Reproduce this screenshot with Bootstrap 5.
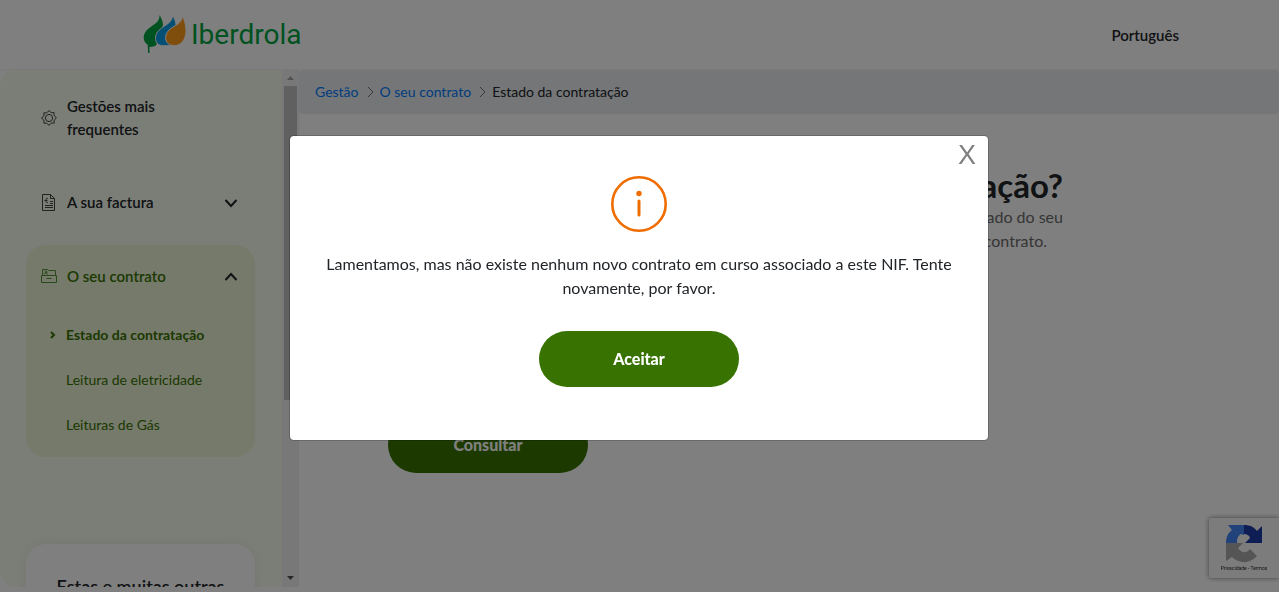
<!DOCTYPE html>
<html lang="pt">
<head>
<meta charset="utf-8">
<meta name="viewport" content="width=device-width, initial-scale=1">
<title>Iberdrola - Estado da contratação</title>
<link href="https://cdn.jsdelivr.net/npm/bootstrap@5.3.0/dist/css/bootstrap.min.css" rel="stylesheet">
<style>
body{font-family:Lato,sans-serif;color:#212529;height:100vh;overflow:hidden}
.site-header{height:70px;padding:0 100px 0 143px;border-bottom:1px solid #f4f4f6}
.brand-name{font:400 28px/32px Roboto,sans-serif;color:#00a443}
.language{font-size:15px;font-weight:600;line-height:22px}
.page-body{height:calc(100vh - 75px)}
.side{width:282px;background:#f6fbee;border-radius:16px 0 0 16px;padding:25px 27px 0 26px;overflow:hidden}
.side-item{padding:0 17px 0 15px;gap:10px;font-size:15px;font-weight:600;line-height:23px;background:none;border:0;color:#212529;text-align:left;width:100%}
.side-gap{margin-top:50px}
.side-active{margin-top:31px;background:#eaf4d6;border-radius:20px;height:212px;padding-top:20px;color:#387200}
.side-active .side-item,.side-active a{color:#387200}
.side-sub{padding-left:40px;margin-top:36px;gap:23px;font-size:14px;line-height:22px}
.side-sub a{text-decoration:none}
.side-sub .marker{left:-16px;top:7px}
.promo{margin-top:87px;border-radius:20px;box-shadow:0 0 12px rgba(0,0,0,.06);padding:29px 30px;height:160px;font-size:18px;line-height:26px;font-weight:600}
.scroll-track{width:17px;background:#f1f1f1}
.scroll-thumb{width:13px;height:314px;background:#c1c1c1}
.crumbs{height:44px;background:#e9ecef;border-radius:4px;padding:0 16px;font-size:14px;line-height:24px}
.crumbs a{color:#007bff;text-decoration:none}
.crumbs svg{margin:0 6px 0 8px}
.intro{margin-top:51px;padding-right:216px}
.intro h1{font-size:33px;line-height:40px;font-weight:700;margin:0}
.intro p{font-size:16px;line-height:24px;color:#6b6b6b;margin:0}
.pill{width:200px;height:56px;border-radius:28px;background:#387200;border:0;color:#fff;font-size:16px;font-weight:900}
.query{margin:164px 0 0 89px}
.recaptcha{position:fixed;right:0;bottom:14px;width:70px;height:60px;box-shadow:0 0 5px gray;border-radius:2px 0 0 2px;background:#f9f9f9;font:5px/8px Roboto,sans-serif;padding-top:5px}
.notice-layer{padding-right:1px}
.notice{max-width:700px;margin:135px auto}
.notice .modal-content{height:306px;border-radius:5px;padding:40px 30px 0}
.notice p{font-size:16px;line-height:24px;margin:20px 0 31px}
.close-x{position:absolute;right:12px;top:4px;background:none;border:0;padding:0;font:27px/30px "Liberation Sans",sans-serif;color:#7f7f7f}
</style>
</head>
<body>
<header class="site-header d-flex align-items-center justify-content-between bg-white">
  <a href="#" class="d-flex align-items-center text-decoration-none gap-1">
    <svg width="44" height="40" viewBox="0 0 44 40" aria-hidden="true">
      <path fill="#00a443" d="M16.500 0C17 8 9 10 4 15-1 20 0 27 4.500 29.500c.5 3 .5 5 .5 8.500h1.500v-6c3-.3 5-.7 6.500-1.500L20 10c0-4-1.800-7-3.500-10z"/>
      <path fill="#0a9ee8" stroke="#fff" d="M29.500 0c0 8-7 9.500-12 14-8 6-6 17 3 16.700h7L33 10c0-4-2-7-3.500-10z"/>
      <path fill="#ff9c1a" stroke="#fff" d="M39.500 0c0 9-9 10.500-13.500 15-6 6-4 15.500 5 15.700 8 0 12-7 12-15.200 0-6-2-11-3.500-15.500z"/>
    </svg>
    <span class="brand-name">Iberdrola</span>
  </a>
  <span class="language">Português</span>
</header>
<div class="page-body d-flex">
  <aside class="side flex-shrink-0">
    <a href="#" class="side-item d-flex align-items-center text-decoration-none">
      <svg class="flex-shrink-0" width="16" height="16" viewBox="0 0 16 16" fill="none" stroke="#444"><circle cx="8" cy="8" r="3.6"/><path d="M6.500 2.200 8 .6l1.500 1.600 1.200.5 2.300-.2v2.300l.7 1.300L15.400 8l-1.700 1.500-.6 1.300.1 2.300-2.300-.1-1.400.6L8 15.400l-1.500-1.700-1.300-.6-2.300.1.100-2.300-.6-1.300L.6 8l1.800-1.500.6-1.300-.1-2.400 2.400.1z"/></svg>
      <span>Gestões mais<br>frequentes</span>
    </a>
    <button class="side-item side-gap d-flex align-items-center" type="button">
      <svg class="flex-shrink-0" width="16" height="18" viewBox="0 0 16 18" fill="none" stroke="#444"><path d="M1.500.5h8l4 4v12H1.500zM9.500.5v4h4M9 7.500h3M9 9.500h3M4 11.500h8M4 13.500h8M7 4.500c-3-1-3 5 0 4M3.500 6.500h3"/></svg>
      <span class="flex-grow-1">A sua factura</span>
      <svg width="14" height="10" viewBox="0 0 14 10" fill="none" stroke="#212529" stroke-width="2"><path d="m1.500 2 5.500 6 5.500-6"/></svg>
    </button>
    <section class="side-active">
      <button class="side-item d-flex align-items-center" type="button">
        <svg class="flex-shrink-0" width="16" height="16" viewBox="0 0 16 16" fill="none" stroke="#55933a"><path d="M.5 6.500h15v7H.5zM1.500 6V.5h5l1 1h7V6M5.500 9.500h5M3.500 5.500c0-2 3-2 3 0"/><circle cx="5" cy="3" r="1"/></svg>
        <span class="flex-grow-1">O seu contrato</span>
        <svg width="14" height="10" viewBox="0 0 14 10" fill="none" stroke="#212529" stroke-width="2"><path d="m1.500 8 5.500-6 5.500 6"/></svg>
      </button>
      <nav class="side-sub d-flex flex-column">
        <a href="#" class="position-relative fw-bold"><svg class="marker position-absolute" width="8" height="8" viewBox="0 0 8 8" fill="none" stroke="#387200" stroke-width="2"><path d="m1 1 3 3-3 3"/></svg>Estado da contratação</a>
        <a href="#">Leitura de eletricidade</a>
        <a href="#">Leituras de Gás</a>
      </nav>
    </section>
    <section class="promo bg-white text-center text-nowrap">Estas e muitas outras</section>
  </aside>
  <div class="scroll-track d-flex flex-column align-items-center flex-shrink-0" aria-hidden="true">
    <svg width="9" height="16" viewBox="0 0 9 16"><path fill="#a3a3a3" d="M1 10h7L4.500 6z"/></svg>
    <div class="scroll-thumb"></div>
    <svg class="mt-auto" width="9" height="16" viewBox="0 0 9 16"><path fill="#505050" d="M1 5h7L4.500 9z"/></svg>
  </div>
  <main class="flex-grow-1">
    <nav class="crumbs d-flex align-items-center" aria-label="Navegação">
      <a href="#">Gestão</a>
      <svg width="7" height="10" viewBox="0 0 7 10" fill="none" stroke="#6c757d"><path d="m1 0 5 5-5 5"/></svg>
      <a href="#">O seu contrato</a>
      <svg width="7" height="10" viewBox="0 0 7 10" fill="none" stroke="#6c757d"><path d="m1 0 5 5-5 5"/></svg>
      <span>Estado da contratação</span>
    </nav>
    <div class="intro text-end">
      <h1>Estado da contratação?</h1>
      <p>Consulte o estado do seu</p>
      <p class="pe-3">contrato.</p>
    </div>
    <button class="query pill" type="button">Consultar</button>
  </main>
</div>
<aside class="recaptcha text-center">
  <svg class="d-block mx-auto" width="40" height="41" viewBox="0 0 40 41" aria-hidden="true">
    <path fill="#1c3aa9" d="M20 2c6 0 10 2 13 6l5-5v17H21l5-5c-1-3-3-4-6-4z"/>
    <path fill="#4285f4" d="M20 2v10l-3-1c-3 2-4 4-4 9H2c0-6 2-10 6-13L4 2z"/>
    <path fill="#ababab" d="M2 20h17l-5 5c4 6 9 5 12 1l7 7c-7 8-18 8-25 1l-6 4z"/>
  </svg>
  Privacidade - Termos
</aside>
<div class="modal-backdrop show"></div>
<div class="modal notice-layer d-block" tabindex="-1" role="dialog" aria-modal="true">
  <div class="modal-dialog notice">
    <div class="modal-content text-center align-items-center">
      <button class="close-x" type="button" aria-label="Fechar">X</button>
      <svg class="flex-shrink-0" width="56" height="56" viewBox="0 0 56 56" fill="none" stroke="#ef6c00" aria-hidden="true"><circle cx="28" cy="28" r="26.700" stroke-width="2.600"/><path d="M28 25v14" stroke-width="3" stroke-linecap="round"/><circle cx="28" cy="17.500" r="2.700" fill="#ef6c00" stroke="none"/></svg>
      <p>Lamentamos, mas não existe nenhum novo contrato em curso associado a este NIF. Tente novamente, por favor.</p>
      <button class="pill" type="button">Aceitar</button>
    </div>
  </div>
</div>
<script src="https://cdn.jsdelivr.net/npm/bootstrap@5.3.0/dist/js/bootstrap.bundle.min.js"></script>
</body>
</html>
